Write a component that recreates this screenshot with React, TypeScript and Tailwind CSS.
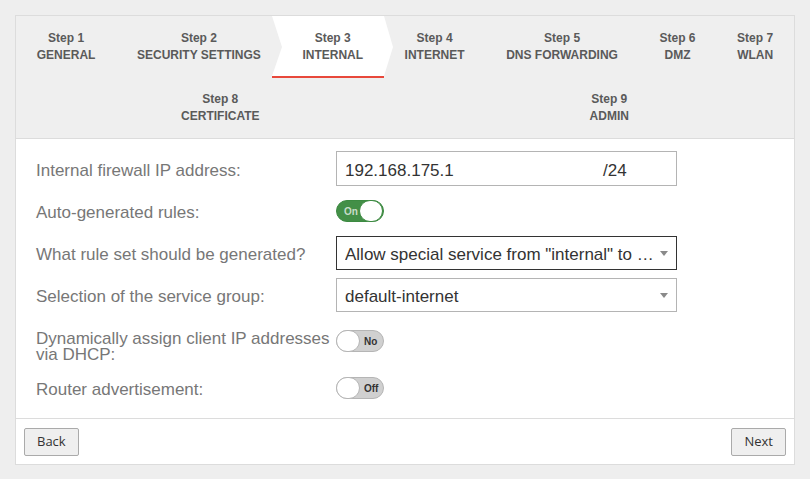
import React from "react";

const steps = [
  { n: 1, name: "GENERAL" },
  { n: 2, name: "SECURITY SETTINGS" },
  { n: 3, name: "INTERNAL", active: true },
  { n: 4, name: "INTERNET" },
  { n: 5, name: "DNS FORWARDING" },
  { n: 6, name: "DMZ" },
  { n: 7, name: "WLAN" },
  { n: 8, name: "CERTIFICATE" },
  { n: 9, name: "ADMIN" },
];

function Caret() {
  return (
    <svg width="8" height="5" viewBox="0 0 8 5" className="shrink-0">
      <path d="M0 0 L8 0 L4 5 Z" fill="#8a8a8a" />
    </svg>
  );
}

function Toggle({ on, text }: { on: boolean; text: string }) {
  if (on) {
    return (
      <div className="flex h-[22px] w-[48px] items-center rounded-full border border-[#3c8a41] bg-[#438f47] pl-[7px]">
        <span className="text-[10px] font-bold text-[#c8dcc9]">{text}</span>
        <span className="ml-auto h-[22px] w-[24px] rounded-full border border-[#3c8a41] bg-white" />
      </div>
    );
  }
  return (
    <div className="flex h-[22px] w-[48px] items-center rounded-full border border-[#b5b5b5] bg-[#d0d0d0]">
      <span className="-ml-px h-[22px] w-[24px] rounded-full border border-[#b5b5b5] bg-white" />
      <span className="ml-[4px] text-[10px] font-bold text-[#333]">{text}</span>
    </div>
  );
}

function Row({ label, children }: { label: string; children: React.ReactNode }) {
  return (
    <div className="flex h-[34px] items-center">
      <div className="w-[300px] pt-[4px] text-[17px] text-[#777]">{label}</div>
      {children}
    </div>
  );
}

export default function App() {
  return (
    <div className="min-h-[479px] bg-[#eeeeee] p-[15px] font-['Liberation_Sans',Arial,sans-serif]">
      <div className="border border-[#dcdcdc] bg-white">
        <div className="flex flex-wrap justify-around border-b border-[#dcdcdc] bg-[#efefef]">
          {steps.map((s) => (
            <div
              key={s.n}
              className="relative h-[61px] px-[20px] pb-[13px] pt-[14px] text-center text-[12px] font-bold leading-[17px] text-[#5a5a5a]"
            >
              {s.active && (
                <svg
                  className="absolute left-[-10px] top-0"
                  width="122"
                  height="62"
                  viewBox="0 0 122 62"
                >
                  <path d="M0 0 L112 0 L121 31 L112 60 L0 60 L10 31 Z" fill="#fff" />
                  <rect x="0" y="60" width="112" height="2" fill="#e8483b" />
                </svg>
              )}
              <div className="relative">Step {s.n}</div>
              <div className="relative whitespace-nowrap">{s.name}</div>
            </div>
          ))}
        </div>

        <div className="px-[20px] pb-[13px] pt-[12px]">
          <div className="flex h-[35px] items-center">
            <div className="w-[300px] pt-[4px] text-[17px] text-[#777]">Internal firewall IP address:</div>
            <div className="flex h-[35px] w-[341px] items-center border border-[#b4b4b4] pl-[8px] pt-[4px] text-[17px] text-[#333]">
              <span className="w-[258px]">192.168.175.1</span>
              <span>/24</span>
            </div>
          </div>

          <div className="mt-[8px]">
            <Row label="Auto-generated rules:">
              <Toggle on text="On" />
            </Row>
          </div>

          <div className="mt-[8px]">
            <Row label="What rule set should be generated?">
              <div className="flex h-[34px] w-[341px] items-center border border-[#333] pl-[8px] pr-[8px] text-[17px] text-[#333]">
                <span className="w-[310px] truncate pt-[4px]">Allow special service from "internal" to "internet"</span>
                <span className="ml-auto">
                  <Caret />
                </span>
              </div>
            </Row>
          </div>

          <div className="mt-[8px]">
            <Row label="Selection of the service group:">
              <div className="flex h-[34px] w-[341px] items-center justify-between border border-[#b4b4b4] pl-[8px] pr-[8px] text-[17px] text-[#333]">
                <span className="pt-[4px]">default-internet</span>
                <Caret />
              </div>
            </Row>
          </div>

          <div className="mt-[18px] flex items-start">
            <div className="w-[300px] pt-px text-[17px] leading-[16px] text-[#777]">
              Dynamically assign client IP addresses via DHCP:
            </div>
            <Toggle on={false} text="No" />
          </div>

          <div className="mt-[8px]">
            <Row label="Router advertisement:">
              <Toggle on={false} text="Off" />
            </Row>
          </div>
        </div>

        <div className="flex justify-between border-t border-[#dcdcdc] px-[8px] pb-[8px] pt-[9px] font-['Open_Sans',sans-serif] text-[13px] text-[#333]">
          <button className="h-[28px] rounded-[2px] border border-[#aaa] bg-[#efefef] px-[12px]">Back</button>
          <button className="h-[28px] rounded-[2px] border border-[#aaa] bg-[#efefef] px-[12px]">Next</button>
        </div>
      </div>
    </div>
  );
}
